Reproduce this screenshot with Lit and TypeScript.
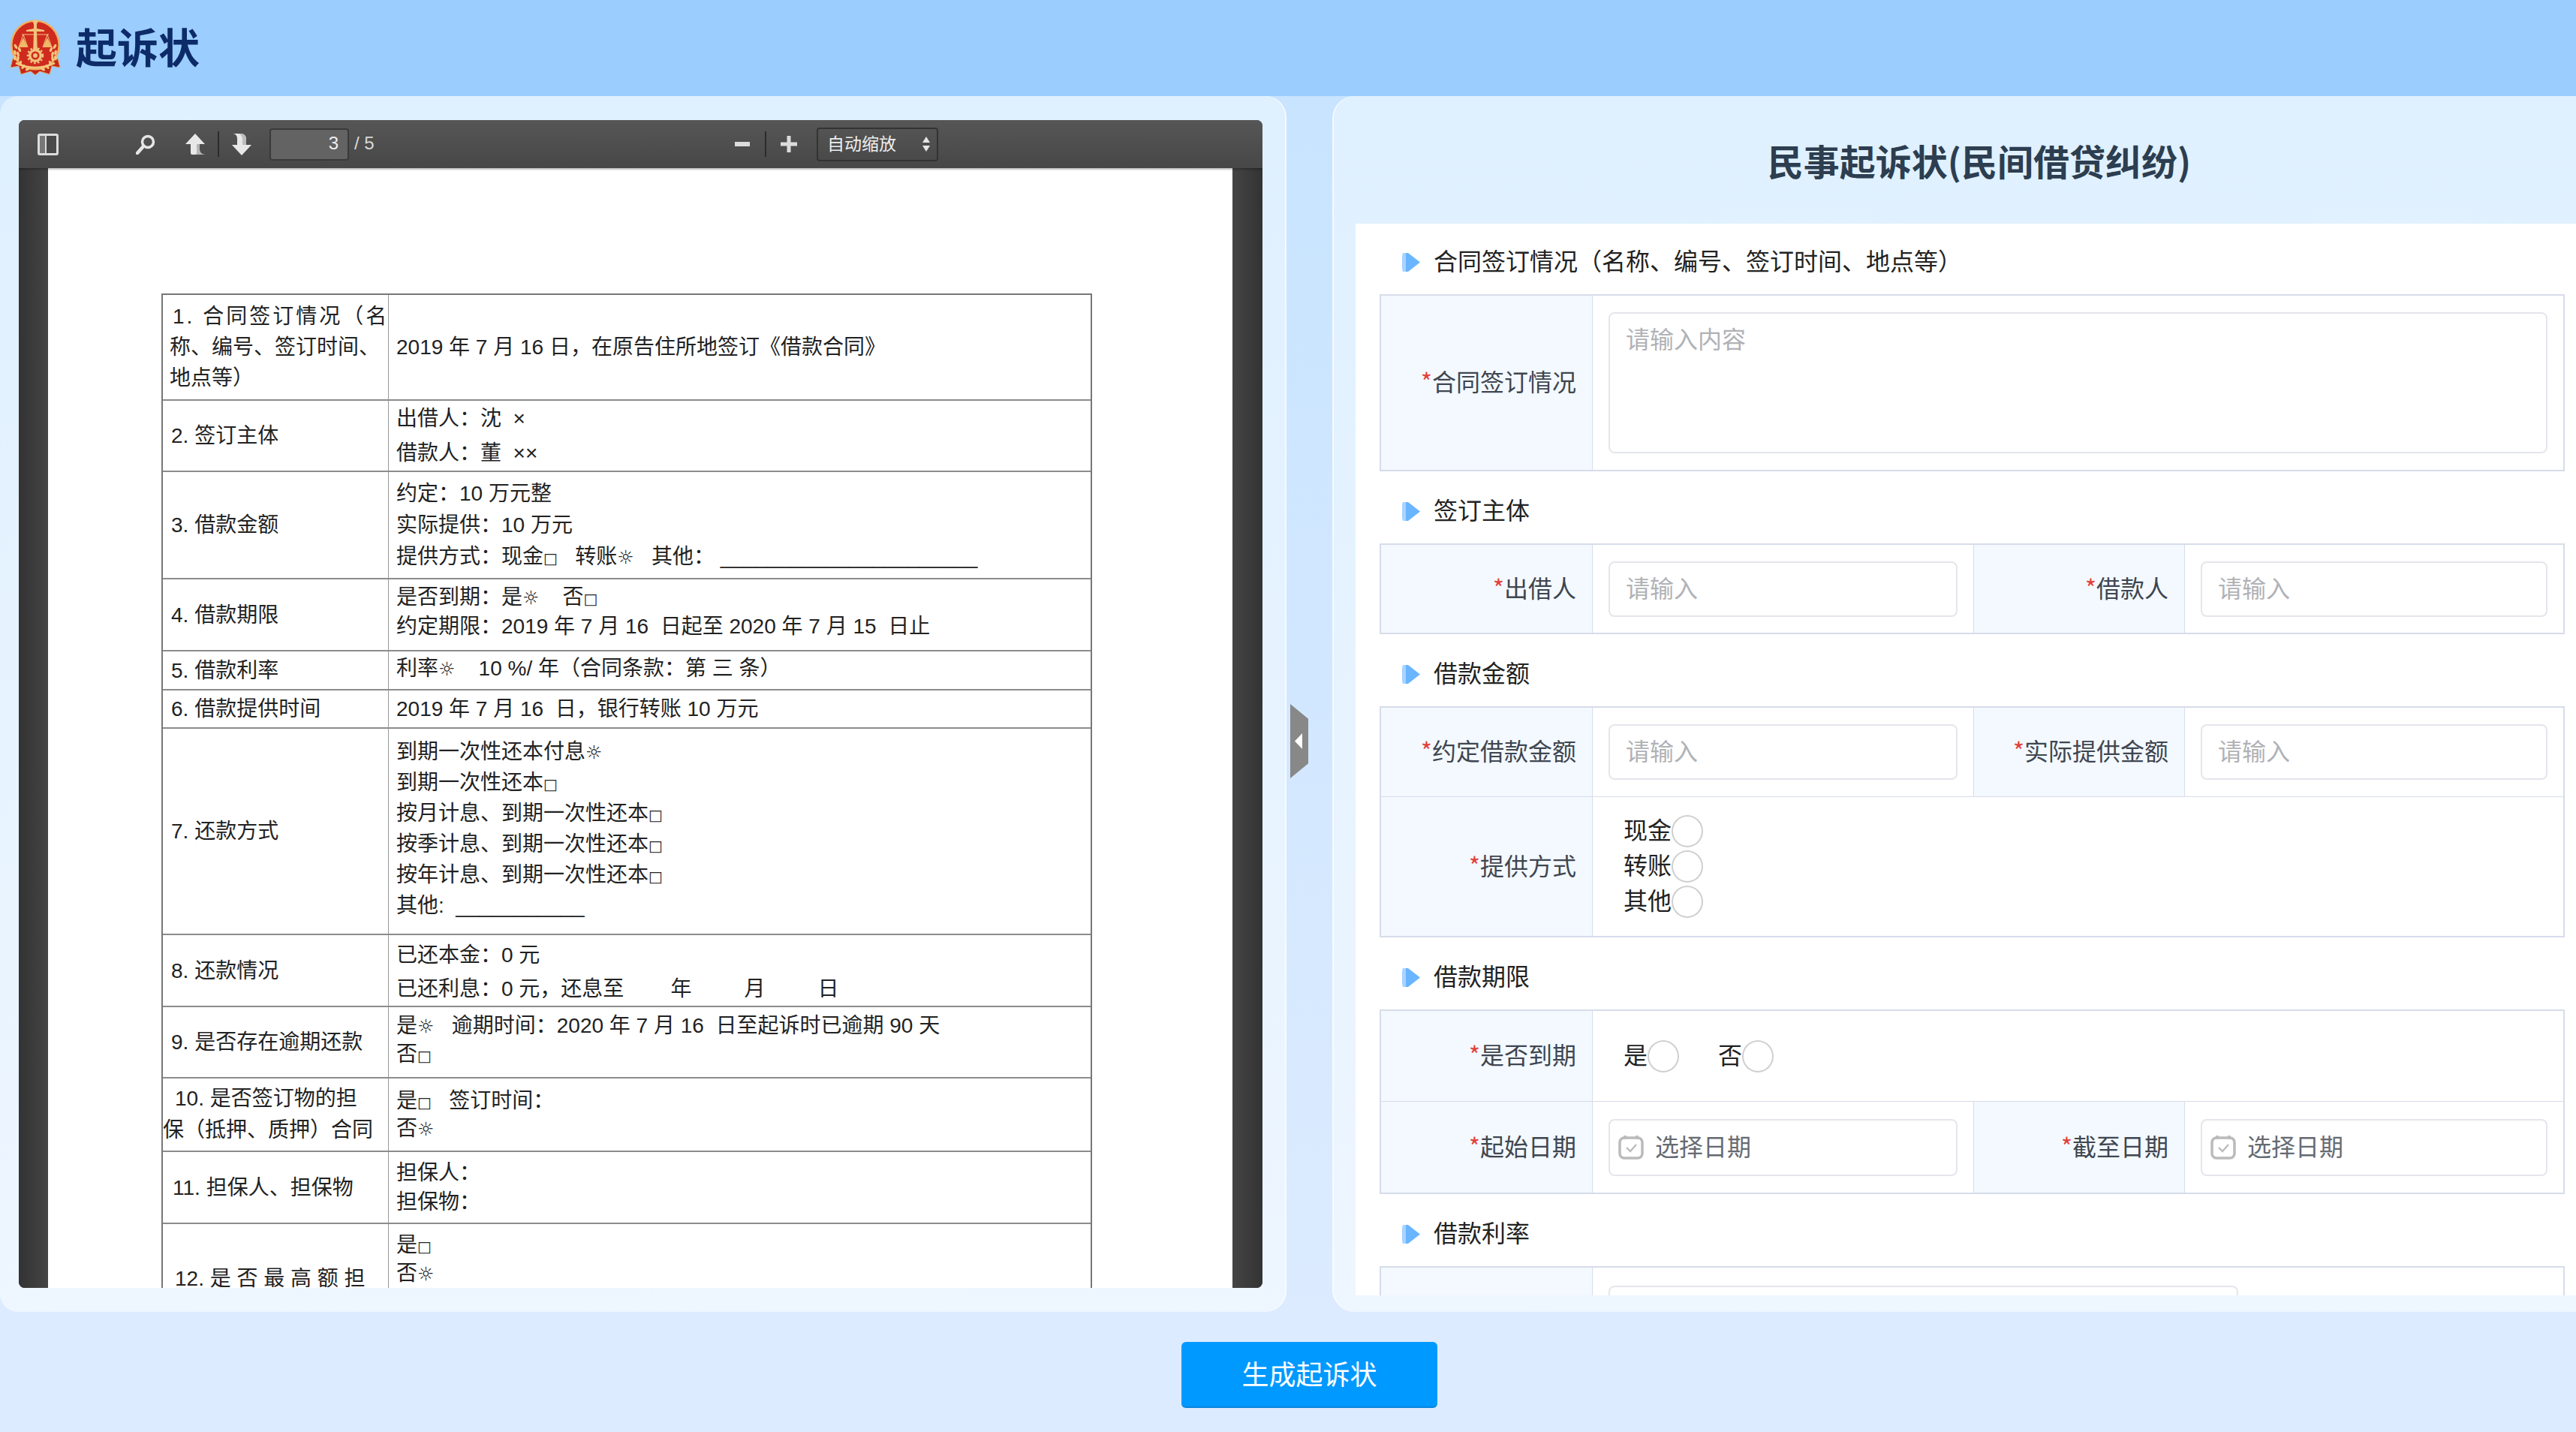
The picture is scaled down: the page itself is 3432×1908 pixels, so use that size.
import { LitElement, html, css, svg } from "lit";
import { customElement } from "lit/decorators.js";

const ON = "\u263C";
const OFF = "\u25A1";

interface Row { h: number; left: { t: string; x: number; ls?: number }[]; leftLh: number; right: string[]; rightLh: number; nudge?: number; }

const rows: Row[] = [
  { h: 141, left: [{ t: "1. 合同签订情况（名", x: 13, ls: 3 }, { t: "称、编号、签订时间、", x: 9 }, { t: "地点等）", x: 9 }], leftLh: 41, right: ["2019 年 7 月 16 日，在原告住所地签订《借款合同》"], rightLh: 41 },
  { h: 95, left: [{ t: "2. 签订主体", x: 11 }], leftLh: 41, right: ["出借人：沈  ×", "借款人：董  ××"], rightLh: 46 },
  { h: 143, left: [{ t: "3. 借款金额", x: 11 }], leftLh: 41, right: ["约定：10 万元整", "实际提供：10 万元", `提供方式：现金${OFF}   转账${ON}   其他： ______________________`], rightLh: 42 },
  { h: 96, left: [{ t: "4. 借款期限", x: 11 }], leftLh: 41, right: [`是否到期：是${ON}    否${OFF}`, "约定期限：2019 年 7 月 16  日起至 2020 年 7 月 15  日止"], rightLh: 39, nudge: -4 },
  { h: 52, left: [{ t: "5. 借款利率", x: 11 }], leftLh: 41, right: [`利率${ON}    10 %/ 年（合同条款：第 三 条）`], rightLh: 41, nudge: -3 },
  { h: 51, left: [{ t: "6. 借款提供时间", x: 11 }], leftLh: 41, right: ["2019 年 7 月 16  日，银行转账 10 万元"], rightLh: 41 },
  { h: 275, left: [{ t: "7. 还款方式", x: 11 }], leftLh: 41, right: [`到期一次性还本付息${ON}`, `到期一次性还本${OFF}`, `按月计息、到期一次性还本${OFF}`, `按季计息、到期一次性还本${OFF}`, `按年计息、到期一次性还本${OFF}`, "其他:  ___________"], rightLh: 41, nudge: -4 },
  { h: 96, left: [{ t: "8. 还款情况", x: 11 }], leftLh: 41, right: ["已还本金：0 元", "已还利息：0 元，还息至        年         月         日"], rightLh: 45, nudge: 2 },
  { h: 95, left: [{ t: "9. 是否存在逾期还款", x: 11 }], leftLh: 41, right: [`是${ON}   逾期时间：2020 年 7 月 16  日至起诉时已逾期 90 天`, `否${OFF}`], rightLh: 38, nudge: -3 },
  { h: 98, left: [{ t: "10. 是否签订物的担", x: 16 }, { t: "保（抵押、质押）合同", x: 0 }], leftLh: 42, right: [`是${OFF}   签订时间：`, `否${ON}`], rightLh: 37 },
  { h: 96, left: [{ t: "11. 担保人、担保物", x: 13 }], leftLh: 41, right: ["担保人：", "担保物："], rightLh: 39 },
  { h: 96, left: [], leftLh: 41, right: [`是${OFF}`, `否${ON}`], rightLh: 38 },
];

const wheat = (side: number) => {
  const pts = [[13, 40, -25], [11, 46, -12], [11, 52, 5], [14, 58, 22], [18, 63, 38], [24, 66, 55], [8, 36, -30], [7, 44, -10], [7, 51, 10]];
  return pts.map(([x, y, r]) => svg`<ellipse cx=${side > 0 ? x : 68 - x} cy=${y} rx="1.7" ry="3.4" fill="#f4c67c" transform=${`rotate(${side > 0 ? r : -r} ${side > 0 ? x : 68 - x} ${y})`}/>`);
};

@customElement("app-root")
export class AppRoot extends LitElement {
  static styles = css`
    :host { display: block; width: 3432px; height: 1908px; overflow: hidden; background: #dcebff; font-family: "Liberation Sans", "Noto Sans CJK SC", sans-serif; color: #333; }
    .header { height: 128px; background: #9bcdff; display: flex; align-items: center; padding-left: 13px; box-sizing: border-box; }
    .logo { width: 68px; height: 76px; display: block; }
    .brand { margin-left: 20px; padding-bottom: 8px; font: 700 55px/1 "Noto Sans CJK SC", sans-serif; color: #0d2b69; }
    .main { height: 1620px; display: flex; position: relative; background: linear-gradient(#c8e4ff, #dcebff); }
    .left { width: 1714px; box-sizing: border-box; padding: 32px 32px 32px 25px; background: linear-gradient(#dff0ff, #eef6ff); border-radius: 24px 28px 28px 24px; box-shadow: inset -2px 0 0 rgba(255,255,255,.6); display: flex; }
    .viewer { flex: 1; display: flex; flex-direction: column; overflow: hidden; border-radius: 8px; background: #404040; }
    .toolbar { height: 64px; flex: none; box-sizing: border-box; display: flex; align-items: center; padding-left: 25px; padding-right: 432px; background: linear-gradient(#565656, #474747); box-shadow: 0 2px 2px rgba(0,0,0,.25); position: relative; color: #e2e2e2; }
    .ticon { display: block; flex: none; }
    .sep { width: 2px; height: 34px; background: #2c2c2c; flex: none; }
    .pageinput { width: 106px; height: 43px; box-sizing: border-box; border: 2px solid #3a3a3a; border-radius: 4px; background: #636363; flex: none; margin-left: 23px; text-align: right; padding-right: 12px; font-size: 24px; line-height: 36px; color: #eee; }
    .of { margin-left: 7px; padding-bottom: 3px; font-size: 24px; color: #d8d8d8; }
    .zoomsel { margin-left: 26px; width: 162px; height: 45px; box-sizing: border-box; border: 2px solid #333; border-radius: 4px; background: linear-gradient(#545454, #494949); display: flex; align-items: center; justify-content: space-between; padding: 0 9px 4px 12px; font: 23px/1 "Noto Sans CJK SC", sans-serif; color: #eee; flex: none; }
    .zoomsel svg { margin-top: 4px; }
    .spacer { flex: 1; }
    .m181 { margin-left: 103px; } .m40 { margin-left: 40px; } .m17 { margin-left: 17px; } .m16 { margin-left: 16px; } .m20 { margin-left: 20px; } .m19 { margin-left: 19px; }
    .pagearea { flex: 1; min-height: 0; display: flex; padding: 0 40px 0 39px; background: linear-gradient(90deg, #333 0, #444 39px, #444 calc(100% - 39px), #333 100%); }
    .page { flex: 1; background: #fff; overflow: hidden; padding: 167px 0 0 151px; font-size: 28px; color: #222; }
    .ptable { width: 1240px; border: solid #777; border-width: 2px 2px 0 2px; box-sizing: border-box; }
    .prow { display: grid; grid-template-columns: 300px 1fr; box-sizing: border-box; border-bottom: 2px solid #8c8c8c; }
    .pcell { display: flex; flex-direction: column; justify-content: center; white-space: pre; overflow: hidden; }
    .pcell + .pcell { border-left: 1px solid #999; padding-left: 10px; }
    .lab12 { padding-left: 16px; }
    .lab12 div { transform: translateY(25px); }
    .mk { font-family: "DejaVu Sans", sans-serif; font-size: 20px; line-height: 0; }
    .mk.on { font-size: 25px; }

    .right { flex: 1; margin-left: 61px; border-radius: 30px 0 0 30px; background: linear-gradient(#dff0ff, #eef6ff); box-shadow: inset 2px 0 0 rgba(255,255,255,.6); display: flex; flex-direction: column; height: 1620px; padding-left: 31px; box-sizing: border-box; padding-bottom: 22px; }
    .title { height: 170px; flex: none; margin-left: 36px; display: flex; align-items: center; justify-content: center; font: 700 48px/1 "Noto Sans CJK SC", sans-serif; color: #2c3e50; }
    .form { flex: 1; min-height: 0; overflow: hidden; background: #fff; padding: 8px 15px 0 32px; font: 32px/1.2 "Noto Sans CJK SC", sans-serif; }
    .sec { height: 86px; display: flex; align-items: center; padding-left: 30px; color: #222; margin-top: 10px; }
    .sec.first { margin-top: 0; }
    .sec svg { margin-right: 17px; flex: none; }
    .sec span { padding-bottom: 5px; }
    .grid { display: grid; grid-template-columns: 281px 507px 280px 1fr; border: 2px solid #d7dcea; box-sizing: border-box; background: #d7dcea; gap: 1px; }
    .l { background: #f3f9ff; display: flex; align-items: center; justify-content: flex-end; padding: 0 21px 5px 0; color: #3f4650; white-space: nowrap; }
    .v { background: #fff; display: flex; align-items: center; padding: 0 21px; color: #222; min-width: 0; }
    .req { color: #e2403a; }
    .span3 { grid-column: span 3; }
    .input { flex: 1; height: 74px; box-sizing: border-box; border: 2px solid #e4e6ec; border-radius: 8px; display: flex; align-items: center; padding: 0 0 5px 21px; color: #b0b2b6; background: #fff; }
    .input.tall { height: 188px; align-items: flex-start; padding-top: 13px; }
    .input.date { height: 76px; padding-left: 11px; color: #666b72; gap: 15px; padding-bottom: 0; }
    .input.date span { padding-bottom: 5px; }
    .rcol { display: flex; flex-direction: column; gap: 4px; margin-left: 41px; }
    .ropt { display: flex; align-items: center; height: 43px; }
    .rinline { display: flex; align-items: center; margin-left: 41px; }
    .rinline .ropt + .ropt { margin-left: 52px; }
    .rtxt { transform: translateY(-3px); }
    .radio { width: 42px; height: 43px; box-sizing: border-box; border: 2px solid #cfcfcf; border-radius: 50%; background: #fff; flex: none; }
    .h227 { height: 227px; } .h112 { height: 112px; } .h113 { height: 113px; } .h180 { height: 180px; } .h115 { height: 115px; } .h116 { height: 116px; }
    .unit { display: flex; align-items: center; margin-left: 3px; flex: none; color: #222; }
    .unit .ropt + .ropt { margin-left: 51px; }
    .unit .pct { margin-right: 20px; padding-bottom: 3px; }
    .v.rate { padding-right: 44px; }

    .handle { position: absolute; left: 1719px; top: 810px; width: 24px; height: 99px; background: #888; clip-path: polygon(0 0, 100% 20%, 100% 80%, 0 100%); display: flex; align-items: center; justify-content: center; }
    .handle i { width: 10px; height: 21px; background: #fff; clip-path: polygon(0 50%, 100% 0, 100% 100%); display: block; margin-left: -2px; }
    .footer { height: 160px; box-sizing: border-box; padding: 40px 0 0 1574px; background: #dcebff; }
    .btn { width: 341px; height: 88px; box-sizing: border-box; background: #0099ff; border-radius: 6px; border-bottom: 2px solid #0a84dc; display: flex; align-items: center; justify-content: center; padding-bottom: 4px; color: #fff; font: 36px/1 "Noto Sans CJK SC", sans-serif; }
  `;

  private mark(line: string) {
    const parts = line.split(new RegExp(`([${ON}${OFF}])`));
    return parts.map((p) => (p === ON ? html`<span class="mk on">${p}</span>` : p === OFF ? html`<span class="mk">${p}</span>` : p));
  }

  private radio(t: string) {
    return html`<div class="ropt"><span class="rtxt">${t}</span><span class="radio"></span></div>`;
  }

  private sec(t: string, first = false) {
    return html`<div class="sec ${first ? "first" : ""}">
      <svg width="25" height="25" viewBox="0 0 25 25"><path d="M1 0 L8 0 L24 12.5 L8 25 L1 25 Q-1 12 1 0Z" fill="#6ab5ff"/><path d="M1 0 L5 0 L5 25 L1 25 Q-1 12 1 0Z" fill="#a9d4ff"/></svg>
      <span>${t}</span></div>`;
  }

  private label(t: string, cls = "") {
    return html`<div class="l ${cls}"><span class="req">*</span>${t}</div>`;
  }

  private input(t = "请输入") {
    return html`<div class="v"><div class="input">${t}</div></div>`;
  }

  private date() {
    return html`<div class="v"><div class="input date">
      <svg width="34" height="33" viewBox="0 0 34 33" fill="none" stroke="#bbb" stroke-width="3.500"><rect x="2" y="4" width="30" height="27" rx="6"/><path d="M9 1v5M25 1v5"/><path d="M11 17l5 5 8-9" stroke-width="2.4"/></svg>
      <span>选择日期</span></div></div>`;
  }

  private logo() {
    return html`<svg class="logo" viewBox="0 0 68 76">
      <path d="M4 52 L1 64 L12 62 L15 73 L28 69 L34 74 L40 69 L53 73 L56 62 L67 64 L64 52 Z" fill="#c5281c" stroke="#e9a458" stroke-width="1"/>
      <ellipse cx="34" cy="34" rx="33" ry="33.5" fill="#f0b060"/>
      <ellipse cx="34" cy="34" rx="30.5" ry="31" fill="#cf2a1e"/>
      ${wheat(1)}${wheat(-1)}
      <path d="M32 6 L36 6 L36 12 L46 14 L46 16 L36 16 L37 46 L31 46 L32 16 L22 16 L22 14 L32 12 Z" fill="#f2c27c"/>
      <path d="M30 2 L34 0 L38 2 L36 6 L32 6 Z" fill="#f2c27c"/>
      <path d="M16 20 H52 M18 20 L12 37 M18 20 L24 37 M50 20 L44 37 M50 20 L56 37" stroke="#f2c27c" stroke-width="1" fill="none"/>
      <path d="M18 24 L24 37 H12 Z M50 24 L56 37 H44 Z" fill="#f0b868"/>
      <circle cx="34" cy="48" r="9" fill="#f2c27c"/><circle cx="34" cy="48" r="10" fill="none" stroke="#f2c27c" stroke-width="2.5" stroke-dasharray="2.5 2.5"/>
      <circle cx="34" cy="48" r="5.5" fill="#cf2a1e"/><circle cx="34" cy="48" r="3" fill="#f2c27c"/>
      <path d="M8 58 Q34 70 60 58" stroke="#f4c67c" stroke-width="2.5" fill="none"/>
    </svg>`;
  }

  private toolbar() {
    return html`<div class="toolbar">
      <svg class="ticon" width="28" height="29" viewBox="0 0 28 29"><rect x="0" y="0" width="28" height="29" rx="3" fill="#dcdcdc"/><rect x="3" y="3" width="7" height="23" fill="#777"/><rect x="12" y="3" width="13" height="23" fill="#4a4a4a"/></svg>
      <svg class="ticon m181" width="26" height="27" viewBox="0 0 26 27" fill="none"><circle cx="16" cy="10" r="7.5" stroke="#e6e6e6" stroke-width="3.5"/><path d="M10 16 L2 25" stroke="#e6e6e6" stroke-width="4.5" stroke-linecap="round"/></svg>
      <svg class="ticon m40" width="26" height="29" viewBox="0 0 26 29"><path d="M13 0 L26 14 L19 14 L19 21 C19 25 22 28 26 28 L9 28 C7.500 28 7 27 7 25 L7 14 L0 14 Z" fill="#e8e8e8"/><path d="M19 14 L19 21 C19 25 22 28 26 28 L14 28 C16 26 15 18 15 14Z" fill="#b5b5b5"/></svg>
      <span class="sep m17"></span>
      <svg class="ticon m16" width="28" height="29" viewBox="0 0 28 29"><path d="M14 29 L27 15 L20 15 L20 7 C20 3 17 0 13 0 L2 0 C6 0 8 3 8 7 L8 15 L1 15 Z" fill="#e8e8e8"/><path d="M20 15 L20 7 C20 3 17 0 13 0 L9 0 C14 1 15 5 15 9 L15 15Z" fill="#bdbdbd"/></svg>
      <div class="pageinput">3</div>
      <span class="of">/ 5</span>
      <span class="spacer"></span>
      <svg class="ticon" width="20" height="6" viewBox="0 0 20 6"><rect width="20" height="6" fill="#dcdcdc"/></svg>
      <span class="sep m20"></span>
      <svg class="ticon m19" width="22" height="22" viewBox="0 0 22 22"><path d="M8.500 0h5v8.500H22v5h-8.500V22h-5v-8.500H0v-5h8.500z" fill="#dcdcdc"/></svg>
      <div class="zoomsel"><span>自动缩放</span>
        <svg width="10" height="20" viewBox="0 0 10 20"><path d="M5 0 L10 8 H0 Z M5 20 L0 12 H10 Z" fill="#e6e6e6"/></svg></div>
    </div>`;
  }

  private ptable() {
    return html`<div class="ptable">
      ${rows.map((r, i) => html`<div class="prow" style="height:${r.h}px">
        <div class="pcell ${i === 11 ? "lab12" : ""}" style="line-height:${r.leftLh}px">
          ${i === 11 ? html`<div>12. 是 否 最 高 额 担</div>` : r.left.map((l) => html`<div style="padding-left:${l.x}px;letter-spacing:${l.ls ?? 0}px">${l.t}</div>`)}
        </div>
        <div class="pcell" style="line-height:${r.rightLh}px;padding-bottom:${r.nudge && r.nudge < 0 ? -r.nudge * 2 : 0}px;padding-top:${r.nudge && r.nudge > 0 ? r.nudge * 2 : 0}px">
          ${r.right.map((t) => html`<div>${this.mark(t)}</div>`)}
        </div>
      </div>`)}
    </div>`;
  }

  render() {
    return html`
      <div class="header">${this.logo()}<div class="brand">起诉状</div></div>
      <div class="main">
        <div class="left">
          <div class="viewer">
            ${this.toolbar()}
            <div class="pagearea"><div class="page">${this.ptable()}</div></div>
          </div>
        </div>
        <div class="right">
          <div class="title">民事起诉状(民间借贷纠纷)</div>
          <div class="form">
            ${this.sec("合同签订情况（名称、编号、签订时间、地点等）", true)}
            <div class="grid">
              ${this.label("合同签订情况", "h227")}
              <div class="v span3"><div class="input tall">请输入内容</div></div>
            </div>

            ${this.sec("签订主体")}
            <div class="grid">
              ${this.label("出借人", "h112")}
              ${this.input()}
              ${this.label("借款人")}
              ${this.input()}
            </div>

            ${this.sec("借款金额")}
            <div class="grid">
              ${this.label("约定借款金额", "h113")}
              ${this.input()}
              ${this.label("实际提供金额")}
              ${this.input()}
              ${this.label("提供方式", "h180")}
              <div class="v span3" style="padding:0"><div class="rcol">${this.radio("现金")}${this.radio("转账")}${this.radio("其他")}</div></div>
            </div>

            ${this.sec("借款期限")}
            <div class="grid">
              ${this.label("是否到期", "h115")}
              <div class="v span3" style="padding:0"><div class="rinline">${this.radio("是")}${this.radio("否")}</div></div>
              ${this.label("起始日期", "h116")}
              ${this.date()}
              ${this.label("截至日期")}
              ${this.date()}
            </div>

            ${this.sec("借款利率")}
            <div class="grid">
              ${this.label("利率", "h116")}
              <div class="v span3 rate">
                <div class="input">请输入</div>
                <div class="unit"><span class="pct">%/</span>${this.radio("年")}${this.radio("季")}${this.radio("月")}</div>
              </div>
            </div>
          </div>
        </div>
        <div class="handle"><i></i></div>
      </div>
      <div class="footer"><div class="btn">生成起诉状</div></div>
    `;
  }
}
